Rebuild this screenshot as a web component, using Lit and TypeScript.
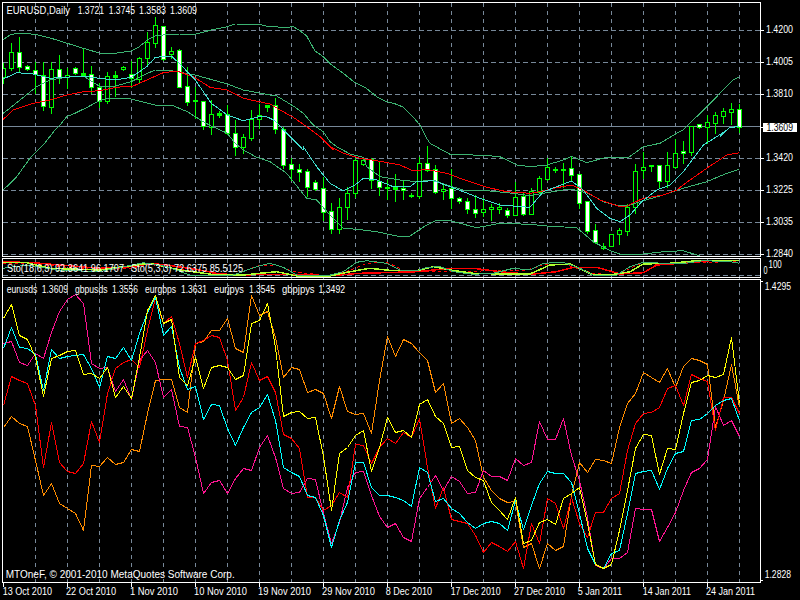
import { LitElement, html, svg, css } from "lit";
import { customElement } from "lit/decorators.js";

type P = [number, number];
const seg = (ox: number, oy: number, v: number[]): P[] => {
  const r: P[] = [];
  for (let i = 0; i < v.length; i += 2) r.push([ox + v[i] / 3, oy + v[i + 1] / 3]);
  return r;
};
const pts = (p: P[]) => p.map(([x, y]) => `${x.toFixed(1)},${y.toFixed(1)}`).join(" ");
const bars = (v: number[]): P[] => v.map((y, i) => [3.5 + 8 * i, y + 0.5]);

// [bodyTop, bodyBottom, wickTop, wickBottom, white]
const C: [number, number, number, number, number][] = [
  [68,77,63,83,0],[52,68,43,70,0],[52,67,37,72,1],[66,69,65,70,1],[70,74,62,93,1],[75,106,62,110,1],[69,107,62,113,0],[69,77,55,83,1],[75,77,68,88,0],[68,73,67,74,1],
  [73,75,49,75,2],[74,87,66,93,1],[87,101,83,107,1],[76,101,72,103,0],[75,77,71,96,2],[67,69,66,70,0],[74,78,61,87,1],[58,79,57,83,0],[42,58,32,66,0],[25,43,17,47,0],
  [26,59,26,60,1],[51,54,47,58,0],[50,87,49,87,1],[86,102,67,105,1],[100,101,87,118,2],[101,126,101,129,1],[114,127,100,134,0],[113,115,111,117,2],[114,133,105,134,1],[133,147,120,155,1],
  [137,147,134,153,0],[119,138,110,140,0],[115,119,104,128,0],[105,107,105,111,2],[105,129,98,133,1],[129,165,127,168,1],[164,169,158,180,1],[169,172,164,181,1],[171,187,169,196,1],[182,189,180,190,1],
  [188,212,177,220,1],[211,229,203,233,1],[207,229,198,233,0],[193,207,187,219,0],[160,193,158,197,0],[160,164,158,165,0],[159,180,158,188,1],[181,187,162,195,1],[187,188,180,199,2],[187,189,174,201,2],
  [188,190,181,199,1],[195,195,193,197,2],[163,196,157,198,0],[163,170,146,171,1],[169,192,165,193,1],[189,191,183,199,0],[188,198,169,208,1],[198,201,197,203,1],[201,209,198,213,1],[209,213,195,217,1],
  [209,212,198,216,0],[207,209,204,220,0],[207,209,203,213,0],[210,215,208,217,1],[197,215,182,215,0],[196,214,193,215,1],[191,214,188,214,0],[178,192,176,193,0],[167,179,158,180,0],[169,170,167,172,2],
  [169,169,163,187,2],[168,175,157,180,1],[174,203,174,208,1],[201,231,201,233,1],[230,242,224,243,1],[246,248,243,249,0],[234,246,234,246,0],[230,234,228,244,0],[207,231,204,235,0],[171,207,164,213,0],
  [167,170,152,178,0],[165,166,165,171,2],[165,181,165,188,1],[165,181,152,187,0],[153,167,139,168,0],[151,153,141,163,1],[126,152,126,155,0],[124,127,124,128,1],[122,127,115,143,0],[115,123,112,133,0],
  [111,116,108,123,0],[109,112,103,124,0],[109,127,104,132,1],
];

const UP = [
  ...seg(0,0,[10,118,34,103,58,100,106,103,154,115,202,130,250,145,298,159,346,160,394,153,418,140,442,120,466,108,490,105,538,102,586,103,634,90,682,80,706,72,778,73]),
  ...seg(260,0,[25,80,80,82,100,80,120,92,140,108,165,153,190,170,215,195,250,220,285,248,315,262,350,290,380,305,410,313,430,322,460,352,480,375,500,415]),
  ...seg(260,130,[510,40,570,73,670,76,720,80,770,105,810,110]),
  ...seg(530,130,[50,105,100,90,125,79,170,98,225,83,295,83,340,50,390,40,440,10]),
  ...seg(530,0,[460,390,490,360,530,320,570,280,610,240,628,230]),
];
const LOW = [
  ...seg(0,130,[10,180,50,140,90,85,130,45,165,0]),
  ...seg(0,0,[180,375,200,350,225,340,265,320,298,302,322,295,394,297,466,315,514,315,562,335,610,365,634,378,682,400,706,430]),
  ...seg(0,130,[730,60,770,82]),
  ...seg(260,130,[0,85,30,95,80,130,140,205,170,210,205,250,250,295,290,298,350,305,420,320,450,318,500,285,530,270,570,272,650,293,720,280,810,283]),
  ...seg(530,130,[50,288,140,293,190,335,240,362,270,372,340,372,400,365,460,362,510,378,560,395]),
];
const MID = [
  ...seg(0,0,[10,340,60,300,110,260,150,240,200,232,250,228,300,260,346,258,394,245,442,220,466,210,514,212,586,225,682,252,730,270,810,285]),
  ...seg(260,0,[45,285,100,318,130,340,160,375,190,395,210,425]),
  ...seg(260,130,[230,50,270,72,310,82,320,110,360,140,420,150,470,155,520,150,560,165,610,180,690,183,760,190,810,197]),
  ...seg(530,130,[50,188,100,180,125,178,175,190,220,215,270,228,300,225,340,212,400,195,460,175,530,155,590,130,628,118]),
];
const RED = [
  ...seg(0,0,[10,358,40,330,100,310,150,300,200,285,250,275,300,272,350,262,400,258,440,240,490,218,530,213,580,230,630,262,680,270,730,295,810,312]),
  ...seg(260,0,[30,312,60,330,100,352,140,380,180,410,220,450]),
  ...seg(260,130,[210,50,250,70,300,85,350,92,420,105,460,123,500,118,560,130,620,152,680,172,740,185,810,190]),
  ...seg(530,130,[30,185,70,175,125,165,160,180,210,210,265,228,290,228,340,205,400,195,440,180,480,150,530,115,590,75,628,68]),
];
const AQUA = [
  ...seg(0,0,[10,237,50,218,100,222,150,235,250,228,298,235,346,240,394,232,440,200,466,172,514,168,538,190,586,240,634,310,682,345,730,362,778,350]),
  ...seg(260,0,[20,350,45,362,80,400,130,450]),
  ...seg(260,130,[130,50,170,110,210,160,250,183,285,165,310,145,350,150,400,170,450,170,470,155,520,152,570,170,610,185,660,205,720,225,810,232]),
  ...seg(530,130,[40,185,80,170,125,153,160,180,200,235,240,265,270,275,300,255,335,215,380,180,420,165,460,125,490,85,520,45,560,20,590,0]),
  ...seg(530,0,[570,410,600,382,628,380]),
];

const ST_TEAL = [
  ...seg(0,130,[10,415,80,405,170,420,300,425,370,410,430,398,500,410,570,435,700,435,770,410]),
  ...seg(260,130,[30,400,70,412,110,435,200,438,250,425,290,397,320,392,380,400,420,420,470,422,500,412,540,410,580,425,640,433,700,430,760,415,810,420]),
  ...seg(530,130,[40,400,100,397,150,415,190,435,260,435,300,410,340,397,450,402,520,392,600,395,628,400]),
];
const ST_YEL = [
  ...seg(0,130,[10,398,80,398,150,415,300,420,370,410,450,400,540,420,650,435,730,435]),
  ...seg(260,130,[0,430,50,425,110,438,210,438,270,425,330,415,400,422,470,422,520,410,570,420,640,430,720,432,810,432]),
  ...seg(530,130,[60,405,120,402,190,435,240,435,300,425,340,402,420,400,500,392,628,392]),
];
const ST_RED = [
  ...seg(0,130,[10,395,100,398,180,405,300,415,390,410,450,400,500,405,600,420,660,432,740,435]),
  ...seg(260,130,[0,433,100,433,210,437,300,430,370,428,470,425,570,415,640,415,720,425,810,433]),
  ...seg(530,130,[80,425,130,412,200,412,270,432,340,428,380,405,450,400,540,392,628,392]),
];
const ST_DASH = [
  ...seg(0,130,[10,400,100,402,200,412,300,420,390,415,450,403,520,415,600,428,700,436]),
  ...seg(260,130,[0,405,50,405,100,425,200,437,260,425,320,400,380,397,440,425,570,425,800,420]),
  ...seg(530,130,[40,405,100,402,190,430,260,435,320,405,400,402,628,394]),
];

const YEL = [318,304,335,339,357,396,358,355,351,350, 374,373,378,367,397,386,398,357,310,295, 323,319,377,385,357,388,367,365,367,379,
  375,323,320,303,347,416,412,411,418,417, 456,510,453,447,435,430,471,447,417,432, 430,437,404,399,416,423,447,446,470,477,
  480,502,510,519,497,543,540,522,519,524, 498,493,487,523,564,568,564,530,490,448, 434,435,474,448,449,413,382,380,375,377, 374,337,403];
const CYA = [348,327,347,348,354,390,349,358,356,355, 354,368,387,356,358,347,360,333,312,297, 335,326,367,389,386,419,404,405,428,445,
  427,412,407,394,420,467,472,476,495,497, 515,547,520,502,462,462,487,495,495,497, 500,506,467,472,501,498,508,513,522,528,
  523,521,523,530,500,529,505,483,471,473, 473,482,513,548,564,568,553,550,513,473, 471,470,489,468,453,451,420,419,413,405, 400,398,420];
const RDS = [405,376,380,383,405,467,422,462,471,473, 463,421,442,393,368,362,359,367,330,297, 323,316,343,377,343,340,335,337,360,410,
  397,362,380,376,392,434,438,448,497,497, 510,505,492,497,444,445,463,447,438,443, 432,437,418,467,508,487,519,521,523,535,
  552,542,546,551,541,568,523,543,498,503, 528,497,523,537,512,512,498,493,450,423, 413,412,407,388,385,405,374,378,381,430, 397,397,413];
const ORG = [427,416,423,426,460,495,483,503,508,513, 530,465,466,457,464,462,449,451,413,380, 379,379,407,412,343,341,330,330,318,348,
  352,295,315,311,337,377,367,369,392,389, 393,418,386,411,414,413,433,380,336,356, 339,343,352,360,392,383,423,418,427,440,
  477,490,498,502,501,547,543,568,543,550, 546,495,462,472,459,460,463,427,403,393, 372,377,382,368,387,366,358,360,364,427, 400,364,407];
const PNK = [343,341,362,365,353,358,332,311,299,294, 303,363,368,367,391,379,399,360,350,362, 397,389,426,427,457,493,482,480,493,478,
  468,470,447,435,457,488,493,492,478,479, 513,543,522,487,472,471,495,516,527,523, 537,541,498,487,475,490,476,481,493,492,
  470,476,476,480,458,465,462,421,439,439, 418,455,480,517,565,568,558,558,552,508, 509,509,541,527,512,490,472,468,459,406, 425,420,436];

const T: [string, number, number, number][] = [
  ["EURUSD,Daily",6.5,70,14],["1.3721",77.7,104,14],["1.3745",108.7,135,14],["1.3583",139,166,14],["1.3609",170,197,14],
  ["Sto(18,6,3) 92.3641 96.1707",7,124,272],["Sto(5,3,3) 72.6375 85.5125",131,243,272],
  ["eurusds",6.7,37.3,293],["1.3609",41.7,68,293],["gbpusds",75,107.5,293],["1.3556",112,138,293],["eurgbps",145,176,293],["1.3631",181,207,293],
  ["eurjpys",214,244,293],["1.3545",249,275,293],["gbpjpys",282,314.6,293],["1.3492",318.6,345,293],
  ["MTOneF, © 2001-2010 MetaQuotes Software Corp.",5.7,234.7,578],
  ["1.4200",766,793,33],["1.4005",766,793,65],["1.3810",766,793,97],["1.3420",766,793,161],["1.3225",766,793,193],["1.3035",766,793,225],["1.2840",766,793,257],
  ["1.4295",764.7,791,290],["1.2828",764.7,791,578],["100",768.5,781.8,268],["0",763.5,767.5,274],
  ["13 Oct 2010",2.7,52,595],["22 Oct 2010",66,116,595],["1 Nov 2010",130,178,595],["10 Nov 2010",194,247,595],["19 Nov 2010",258,311,595],["29 Nov 2010",322,375,595],
  ["8 Dec 2010",385.7,432,595],["17 Dec 2010",450.7,500.7,595],["27 Dec 2010",514,565,595],["5 Jan 2011",577.7,622,595],["14 Jan 2011",642.7,691,595],["24 Jan 2011",706,755,595],
];

const VX = Array.from({ length: 23 }, (_, i) => 35 + 32 * i);
const HY = [30, 62, 94, 158, 190, 222, 254];
const XT = Array.from({ length: 12 }, (_, i) => 3 + 64 * i);

@customElement("app-root")
export class AppRoot extends LitElement {
  static styles = css`
    :host { display: block; width: 800px; height: 600px; background: #000; overflow: hidden; }
    .chart { display: block; width: 800px; height: 600px; background: #000; shape-rendering: crispEdges; }
    .grid { stroke: #778899; stroke-width: 1; stroke-dasharray: 5 3; fill: none; }
    .vgrid { stroke: #778899; stroke-width: 1; stroke-dasharray: 4 4; fill: none; }
    .bid { stroke: #778899; stroke-width: 1; }
    .frame { stroke: #fff; stroke-width: 1; fill: none; }
    .ln { fill: none; stroke-width: 1; stroke-linejoin: round; }
    .sea { stroke: #3cb371; }
    .aqua { stroke: #40e0d0; }
    .red { stroke: #ff0000; }
    .red2 { stroke: #ff0000; stroke-width: 1.5; }
    .dash { stroke: #ff0000; stroke-dasharray: 3 3; }
    .lime { stroke: #adff2f; stroke-width: 1.5; }
    .yellow { stroke: #ffff00; }
    .cyan { stroke: #00ffff; }
    .orange { stroke: #ff8c00; }
    .pink { stroke: #ff1493; }
    .wick { stroke: #00ff00; stroke-width: 1; }
    .body { stroke: #00ff00; stroke-width: 1; }
    .bull { fill: #000; }
    .bear { fill: #fff; }
    .doji { fill: #00ff00; }
    .tick { stroke: #fff; stroke-width: 1; }
    .box { fill: #fff; }
    text { font-family: "Liberation Sans", Arial, sans-serif; font-size: 10px; fill: #fff; }
    .bidtext { fill: #000; }
  `;

  private line(p: P[], cls: string) {
    return svg`<polyline class="ln ${cls}" points=${pts(p)}></polyline>`;
  }

  render() {
    return html`<svg class="chart" width="800" height="600" viewBox="0 0 800 600" xmlns="http://www.w3.org/2000/svg">
      <defs>
        <clipPath id="w1"><rect x="3" y="3" width="757" height="253"></rect></clipPath>
        <clipPath id="w2"><rect x="3" y="259" width="757" height="18"></rect></clipPath>
        <clipPath id="w3"><rect x="3" y="280" width="757" height="302"></rect></clipPath>
      </defs>
      ${VX.map((x) => svg`<line class="vgrid" x1=${x + 0.5} x2=${x + 0.5} y1="3" y2="582"></line>`)}
      ${HY.map((y) => svg`<line class="grid" x1="3" x2="760" y1=${y + 0.5} y2=${y + 0.5}></line>`)}
      <line class="grid" x1="3" x2="760" y1="275.5" y2="275.5"></line>
      <line class="bid" x1="3" x2="760" y1="126.5" y2="126.5"></line>
      <g clip-path="url(#w1)">
        ${C.map(([t, b, wt, wb, k], i) => {
          const x = 3 + 8 * i;
          const cls = k === 1 ? "bear" : k === 2 ? "doji" : "bull";
          return svg`<line class="wick" x1=${x + 0.5} x2=${x + 0.5} y1=${wt} y2=${wb + 1}></line>
            <rect class="body ${cls}" x=${x - 1.5} y=${t + 0.5} width="4" height=${Math.max(b - t, 1)}></rect>`;
        })}
        ${this.line(UP, "sea")}${this.line(LOW, "sea")}${this.line(MID, "sea")}
        ${this.line(RED, "red")}${this.line(AQUA, "aqua")}
      </g>
      <g clip-path="url(#w2)">
        ${this.line(ST_DASH, "dash")}${this.line(ST_RED, "red2")}${this.line(ST_YEL, "lime")}${this.line(ST_TEAL, "sea")}
      </g>
      <g clip-path="url(#w3)">
        ${this.line(bars(ORG), "orange")}${this.line(bars(PNK), "pink")}${this.line(bars(RDS), "red")}
        ${this.line(bars(CYA), "cyan")}${this.line(bars(YEL), "yellow")}
      </g>
      <rect class="frame" x="2.5" y="2.5" width="758" height="254"></rect>
      <rect class="frame" x="2.5" y="258.5" width="758" height="19"></rect>
      <rect class="frame" x="2.5" y="279.5" width="758" height="303"></rect>
      ${[...HY, 127].map((y) => svg`<line class="tick" x1="761" x2="764" y1=${y + 0.5} y2=${y + 0.5}></line>`)}
      ${[281, 580].map((y) => svg`<line class="tick" x1="761" x2="763" y1=${y + 0.5} y2=${y + 0.5}></line>`)}
      ${XT.map((x) => svg`<line class="tick" x1=${x + 0.5} x2=${x + 0.5} y1="583" y2="587"></line>`)}
      <rect class="box" x="763" y="123" width="34" height="9"></rect>
      ${T.map(([s, a, b, y]) => svg`<text x=${a} y=${y} textLength=${b - a} lengthAdjust="spacingAndGlyphs">${s}</text>`)}
      <text class="bidtext" x="766.5" y="131" textLength="26.5" lengthAdjust="spacingAndGlyphs">1.3609</text>
    </svg>`;
  }
}
